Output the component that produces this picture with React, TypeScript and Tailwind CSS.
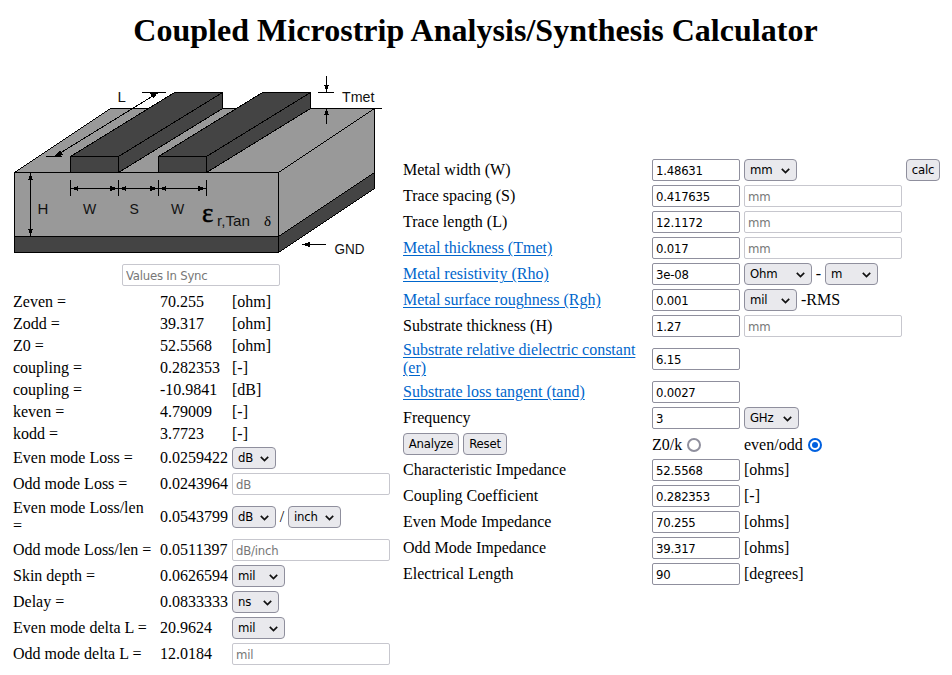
import React from "react";

const ui = "font-['DejaVu_Sans_Condensed','DejaVu_Sans',sans-serif] [font-stretch:condensed] text-[13px] tracking-[-0.22px] leading-[20px]";

function Select({ label, width }: { label: string; width: string }) {
  return (
    <button
      type="button"
      className={`${ui} ${width} flex h-[22px] shrink-0 items-center justify-between rounded-[4px] border border-[#8f8f9d] bg-[#e9e9ed] pl-[5px] pr-[6px] text-black`}
    >
      <span>{label}</span>
      <svg width="9" height="6" viewBox="0 0 9 6" fill="none" className="mt-px">
        <path d="M0.8 0.8 L4.5 4.5 L8.2 0.8" stroke="#111" strokeWidth="1.7" />
      </svg>
    </button>
  );
}

function Button({ label, width }: { label: string; width: string }) {
  return (
    <button
      type="button"
      className={`${ui} ${width} h-[22px] whitespace-nowrap rounded-[4px] border border-[#8f8f9d] bg-[#e9e9ed] text-center text-black`}
    >
      {label}
    </button>
  );
}

function Field({ value }: { value: string }) {
  return (
    <input
      defaultValue={value}
      className={`${ui} block h-[22px] w-[88px] rounded-[2px] border border-[#8f8f9d] bg-white px-[3px] text-black`}
    />
  );
}

function Disabled({ value }: { value: string }) {
  return (
    <input
      readOnly
      value={value}
      className={`${ui} block h-[22px] w-[158px] rounded-[2px] border border-[#c7c7ce] bg-white px-[3px] text-[#777]`}
    />
  );
}

function Diagram() {
  return (
    <svg
      className="block"
      width="370"
      height="184"
      viewBox="13 75 370 184"
      shapeRendering="crispEdges"
      fill="none"
      stroke="#000"
      strokeWidth="1"
    >
      <path d="M14.5 172.5L110.5 108.5H374.5L278.5 172.5Z" fill="#999" />
      <path d="M14.5 172.5H278.5V236.5H14.5Z" fill="#999" />
      <path d="M278.5 172.5L374.5 108.5V172.5L278.5 236.5Z" fill="#999" />
      <path d="M14.5 236.5H278.5V252.5H14.5Z" fill="#444" />
      <path d="M278.5 236.5L374.5 172.5V188.5L278.5 252.5Z" fill="#444" />
      <path d="M374 108.5H382" />
      {[0, 88].map((dx) => (
        <g key={dx} transform={`translate(${dx} 0)`} fill="#444">
          <path d="M70.5 156.5L174.5 92.5H222.5L118.5 156.5Z" />
          <path d="M118.5 156.5L222.5 92.5V108.5L118.5 172.5Z" />
          <path d="M70.5 156.5H118.5V172.5H70.5Z" />
        </g>
      ))}
      <path d="M142 92.5H166M46 156.5H62M54.5 156.5L158.5 92.5" />
      <path d="M70.5 180V196M118.5 180V196M158.5 180V196M206.5 180V196M70.5 188.5H206.5" />
      <path d="M30.5 173V236M318 92.5H334M326.5 76V92M326.5 109V124M302 244.5H326" />
      <g fill="#000" stroke="none">
        <path d="M54 157L60 150L63 155Z" />
        <path d="M158 92L150 93.5L153.5 98.5Z" />
        <path d="M71 188.5L78 186V191Z" />
        <path d="M118 188.5L110 186V191Z" />
        <path d="M119 188.5L126 186V191Z" />
        <path d="M158 188.5L150 186V191Z" />
        <path d="M159 188.5L166 186V191Z" />
        <path d="M206 188.5L198 186V191Z" />
        <path d="M30.5 173L28 180H33Z" />
        <path d="M30.5 236L28 229H33Z" />
        <path d="M326.5 92L324 85H329Z" />
        <path d="M326.5 109L324 115H329Z" />
        <path d="M302 244.5L310 242V247Z" />
      </g>
      <g fill="#111" stroke="none" className="font-['Liberation_Sans',sans-serif] text-[14px]">
        <text x="117.5" y="102" className="text-[15px]">L</text>
        <text x="37.5" y="214" className="text-[15px]">H</text>
        <text x="83" y="214">W</text>
        <text x="129.5" y="214">S</text>
        <text x="171" y="214">W</text>
        <text x="342" y="102" className="text-[15px]" textLength="32.5" lengthAdjust="spacingAndGlyphs">Tmet</text>
        <text x="334.5" y="254" className="text-[15px]" textLength="30" lengthAdjust="spacingAndGlyphs">GND</text>
        <text x="217" y="226" className="text-[15px]" textLength="33" lengthAdjust="spacingAndGlyphs">r,Tan</text>
        <text x="202" y="222" fill="#000" stroke="#000" strokeWidth="0.5" className="font-['Liberation_Serif',serif] text-[27px]">ε</text>
        <text x="264" y="226" fill="#000" className="font-['Liberation_Serif',serif] text-[15px]">δ</text>
      </g>
    </svg>
  );
}

const results: [string, string, React.ReactNode][] = [
  ["Zeven =", "70.255", "[ohm]"],
  ["Zodd =", "39.317", "[ohm]"],
  ["Z0 =", "52.5568", "[ohm]"],
  ["coupling =", "0.282353", "[-]"],
  ["coupling =", "-10.9841", "[dB]"],
  ["keven =", "4.79009", "[-]"],
  ["kodd =", "3.7723", "[-]"],
  ["Even mode Loss =", "0.0259422", <Select label="dB" width="w-[44px]" />],
  ["Odd mode Loss =", "0.0243964", <Disabled value="dB" />],
  [
    "Even mode Loss/len =",
    "0.0543799",
    <div className="flex items-center">
      <Select label="dB" width="w-[44px]" />
      <span className="w-[12px] text-center">/</span>
      <Select label="inch" width="w-[53px]" />
    </div>,
  ],
  ["Odd mode Loss/len =", "0.0511397", <Disabled value="dB/inch" />],
  ["Skin depth =", "0.0626594", <Select label="mil" width="w-[53px]" />],
  ["Delay =", "0.0833333", <Select label="ns" width="w-[47px]" />],
  ["Even mode delta L =", "20.9624", <Select label="mil" width="w-[53px]" />],
  ["Odd mode delta L =", "12.0184", <Disabled value="mil" />],
];

function Link({ children }: { children: React.ReactNode }) {
  return (
    <a href="#" className="text-[#0066cc] underline underline-offset-2">
      {children}
    </a>
  );
}

const inputs: [React.ReactNode, React.ReactNode, React.ReactNode][] = [
  [
    "Metal width (W)",
    <Field value="1.48631" />,
    <div className="flex justify-between">
      <Select label="mm" width="w-[53px]" />
      <Button label="calc" width="w-[34px]" />
    </div>,
  ],
  ["Trace spacing (S)", <Field value="0.417635" />, <Disabled value="mm" />],
  ["Trace length (L)", <Field value="12.1172" />, <Disabled value="mm" />],
  [<Link>Metal thickness (Tmet)</Link>, <Field value="0.017" />, <Disabled value="mm" />],
  [
    <Link>Metal resistivity (Rho)</Link>,
    <Field value="3e-08" />,
    <div className="flex items-center">
      <Select label="Ohm" width="w-[68px]" />
      <span className="w-[13px] text-center">-</span>
      <Select label="m" width="w-[53px]" />
    </div>,
  ],
  [
    <Link>Metal surface roughness (Rgh)</Link>,
    <Field value="0.001" />,
    <div className="flex items-center gap-1">
      <Select label="mil" width="w-[53px]" />
      <span>-RMS</span>
    </div>,
  ],
  ["Substrate thickness (H)", <Field value="1.27" />, <Disabled value="mm" />],
  [<Link>Substrate relative dielectric constant (er)</Link>, <Field value="6.15" />, ""],
  [<Link>Substrate loss tangent (tand)</Link>, <Field value="0.0027" />, ""],
  ["Frequency", <Field value="3" />, <Select label="GHz" width="w-[55px]" />],
  [
    <div className="flex gap-1">
      <Button label="Analyze" width="w-[56px]" />
      <Button label="Reset" width="w-[44px]" />
    </div>,
    <div className="flex items-center gap-[5px] pt-px">
      Z0/k
      <span className="h-[14px] w-[14px] rounded-full border-2 border-[#8f8f9d]" />
    </div>,
    <div className="flex items-center gap-[5px] pt-px">
      even/odd
      <span className="flex h-[14px] w-[14px] items-center justify-center rounded-full border-2 border-[#0060df]">
        <span className="h-[6px] w-[6px] rounded-full bg-[#0060df]" />
      </span>
    </div>,
  ],
  ["Characteristic Impedance", <Field value="52.5568" />, "[ohms]"],
  ["Coupling Coefficient", <Field value="0.282353" />, "[-]"],
  ["Even Mode Impedance", <Field value="70.255" />, "[ohms]"],
  ["Odd Mode Impedance", <Field value="39.317" />, "[ohms]"],
  ["Electrical Length", <Field value="90" />, "[degrees]"],
];

export default function App() {
  return (
    <main className="h-[675px] w-[952px] overflow-hidden bg-white font-['Liberation_Serif',serif] text-[16px] leading-[18px] text-black">
      <h1 className="h-[75px] pt-[12px] pr-px text-center text-[32px] font-bold leading-[36px] tracking-[0.03px]">
        Coupled Microstrip Analysis/Synthesis Calculator
      </h1>
      <div className="flex pl-[13px]">
        <section className="w-[390px]">
          <Diagram />
          <div className="ml-[109px] mt-[5px]">
            <Disabled value="Values In Sync" />
          </div>
          <div className="mt-[7px] grid grid-cols-[143px_68px_158px] items-center gap-x-1 gap-y-1">
            {results.map(([name, value, unit], i) => (
              <React.Fragment key={i}>
                <div>{name}</div>
                <div>{value}</div>
                <div>{unit}</div>
              </React.Fragment>
            ))}
          </div>
        </section>
        <section className="grid grid-cols-[245px_88px_196px] content-start items-center gap-x-1 gap-y-1 pt-[84px]">
          {inputs.map(([name, field, unit], i) => (
            <React.Fragment key={i}>
              <div>{name}</div>
              <div>{field}</div>
              <div>{unit}</div>
            </React.Fragment>
          ))}
        </section>
      </div>
    </main>
  );
}
